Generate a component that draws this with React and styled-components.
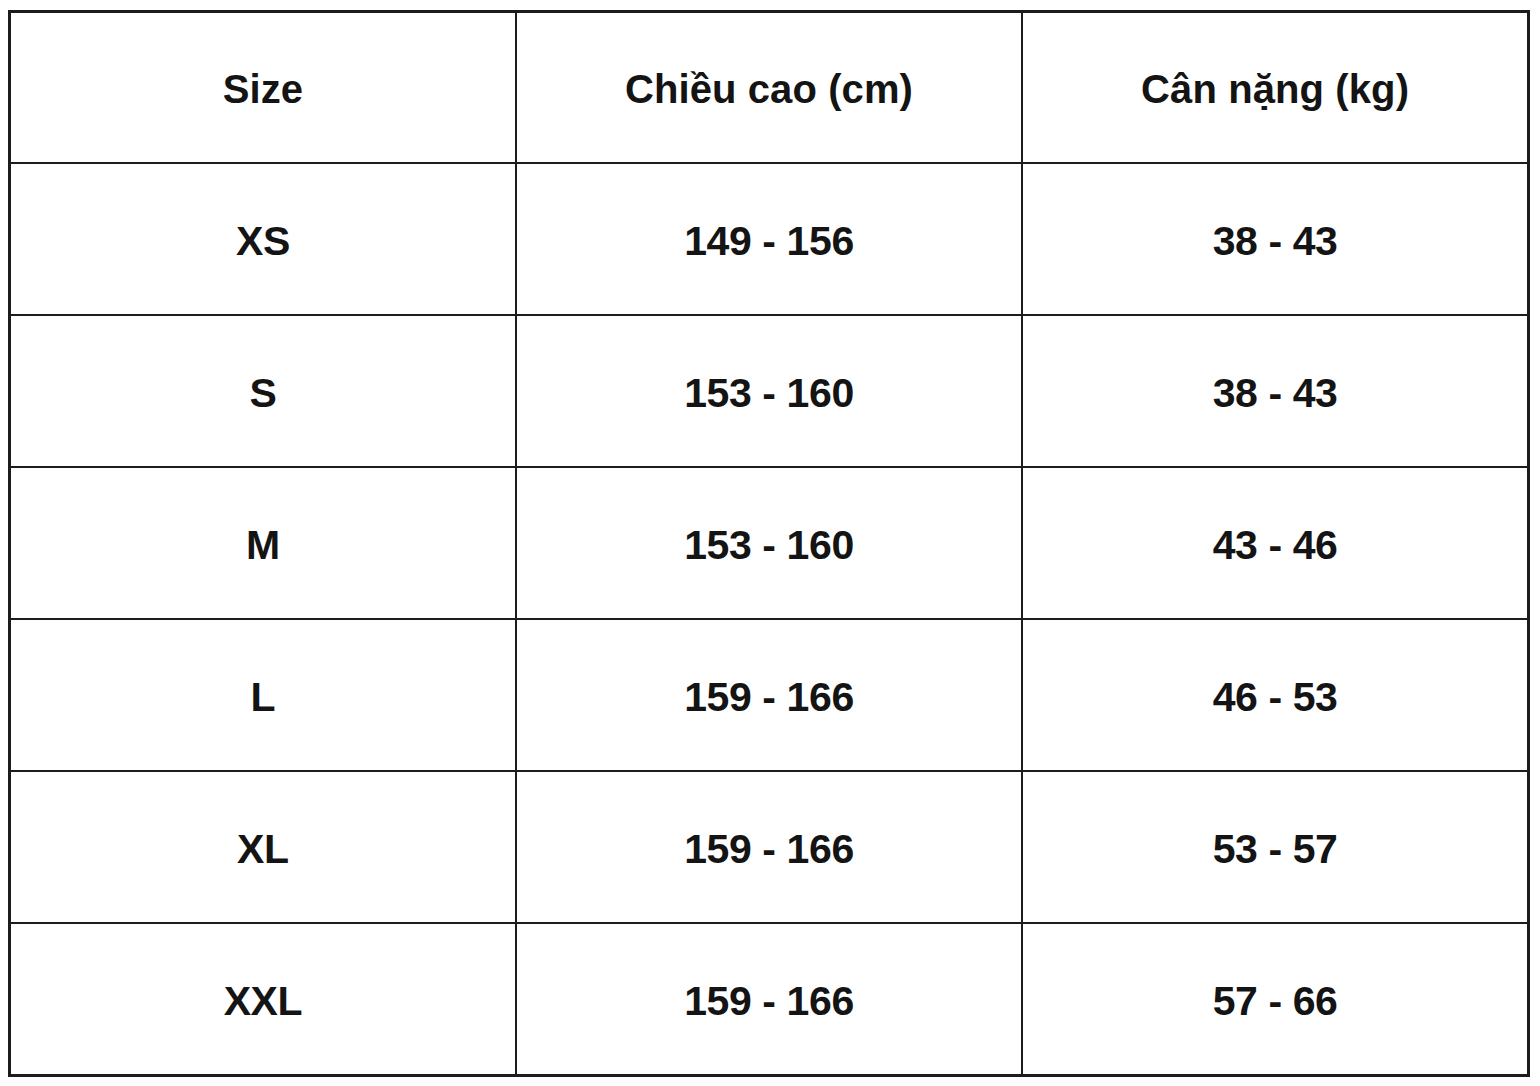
import React from "react";
import styled, { createGlobalStyle } from "styled-components";

const Global = createGlobalStyle`
  html, body { margin: 0; padding: 0; background: #ffffff; }
  body { font-family: "Liberation Sans", Arial, sans-serif; }
`;

const Page = styled.div`
  padding: 10px 10px 8px 8px;
  width: 1540px;
  box-sizing: border-box;
`;

const Table = styled.table`
  width: 1522px;
  border-collapse: collapse;
  table-layout: fixed;
  border: 3px solid #1c1c1c;
`;

const Cell = styled.td`
  height: ${(p) => (p.$head ? "145px" : "146px")};
  border: 2px solid #1c1c1c;
  text-align: center;
  vertical-align: middle;
  padding: 4px 0 0;
  font-family: "Liberation Sans", Arial, sans-serif;
  font-weight: 700;
  color: #141414;
  font-size: ${(p) => (p.$head ? "40px" : "41px")};
  letter-spacing: ${(p) => (p.$head ? "0.1px" : "-0.4px")};
`;

const header = ["Size", "Chiều cao (cm)", "Cân nặng (kg)"];
const rows = [
  ["XS", "149 - 156", "38 - 43"],
  ["S", "153 - 160", "38 - 43"],
  ["M", "153 - 160", "43 - 46"],
  ["L", "159 - 166", "46 - 53"],
  ["XL", "159 - 166", "53 - 57"],
  ["XXL", "159 - 166", "57 - 66"],
];

export default function App() {
  return (
    <>
      <Global />
      <Page>
        <Table>
          <tbody>
            <tr>
              {header.map((h) => (
                <Cell key={h} $head>
                  {h}
                </Cell>
              ))}
            </tr>
            {rows.map((r, i) => (
              <tr key={i}>
                {r.map((c, j) => (
                  <Cell key={j}>{c}</Cell>
                ))}
              </tr>
            ))}
          </tbody>
        </Table>
      </Page>
    </>
  );
}
